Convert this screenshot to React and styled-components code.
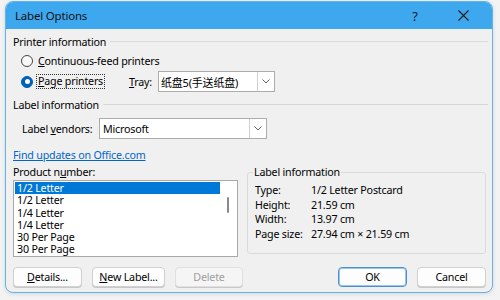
import React from "react";
import styled, { createGlobalStyle } from "styled-components";

const Global = createGlobalStyle`
  html, body { margin: 0; padding: 0; background: #f3f3f3; }
  body {
    font-family: "Noto Sans", "Noto Sans CJK SC", sans-serif;
    font-size: 10.7px;
    letter-spacing: -0.2px;
    color: #000;
  }
  * { box-sizing: border-box; }
`;

const Page = styled.div`
  padding: 1px 0 0 5px;
  width: 500px;
  height: 300px;
`;

const Dialog = styled.div`
  width: 488px;
  height: 292px;
  border: 1px solid #62b2ec;
  border-radius: 8px;
  overflow: hidden;
  background: #f0f0f0;
  display: flex;
  flex-direction: column;
  box-shadow: 0 1px 4px rgba(0,0,0,0.12);
`;

const TitleBar = styled.div`
  height: 27px;
  background: #3ea8ef;
  display: flex;
  align-items: center;
  padding-left: 9px;
  font-size: 11.5px;
  color: #111;
`;

const TitleText = styled.div`
  flex: 1;
`;

const TitleButton = styled.div`
  width: ${p => p.$w}px;
  display: flex;
  align-items: center;
  justify-content: center;
  font-size: 13px;
  color: #1a1a1a;
`;

const Body = styled.div`
  flex: 1;
  display: flex;
  flex-direction: column;
  padding: 0 6px 0 7px;
`;

const SectionHeader = styled.div`
  height: 16px;
  margin-top: ${p => p.$mt}px;
  margin-right: -2px;
  display: flex;
  align-items: center;
  gap: 4px;
  &::after {
    content: "";
    flex: 1;
    height: 1px;
    background: #d9d9d9;
    margin-top: -1px;
  }
`;

const Row = styled.div`
  height: ${p => p.$h || 20}px;
  margin-top: ${p => p.$mt || 0}px;
  padding-left: ${p => p.$pl || 0}px;
  display: flex;
  align-items: center;
`;

const RadioItem = styled.div`
  width: ${p => (p.$w ? `${p.$w}px` : "auto")};
  flex: none;
  display: flex;
  align-items: center;
`;

const RadioCircle = styled.span`
  width: 12px;
  height: 12px;
  border-radius: 50%;
  flex: none;
  margin-right: 3px;
  display: flex;
  align-items: center;
  justify-content: center;
  border: 1px solid ${p => (p.$checked ? "#005fb8" : "#444")};
  background: ${p => (p.$checked ? "#005fb8" : "#f9f9f9")};
  &::after {
    content: "";
    display: ${p => (p.$checked ? "block" : "none")};
    width: 5px;
    height: 5px;
    border-radius: 50%;
    background: #fff;
  }
`;

const RadioLabel = styled.span`
  padding: 0 1px;
  border: 1px dotted ${p => (p.$focus ? "#333" : "transparent")};
  line-height: 13px;
`;

const U = styled.span`
  text-decoration: underline;
  text-underline-offset: 1px;
`;

const FieldLabel = styled.span`
  width: ${p => p.$w}px;
  flex: none;
`;

const Combo = styled.div`
  width: ${p => p.$w}px;
  height: 21px;
  border: 1px solid #acacac;
  background: #fff;
  display: flex;
  align-items: stretch;
`;

const ComboText = styled.div`
  flex: 1;
  padding-left: ${p => p.$pl || 3}px;
  display: flex;
  align-items: center;
  font-size: ${p => p.$fs || 10.7}px;
  white-space: nowrap;
  overflow: hidden;
`;

const ComboArrow = styled.div`
  width: 17px;
  border-left: 1px solid #d0d0d0;
  display: flex;
  align-items: center;
  justify-content: center;
`;

const Link = styled.a`
  display: block;
  height: 16px;
  line-height: 16px;
  margin-top: 8px;
  color: #0066cc;
  text-decoration: underline;
  text-underline-offset: 1px;
`;

const Columns = styled.div`
  display: grid;
  grid-template-columns: 225px 239px;
  column-gap: 9px;
  align-items: start;
  margin-top: 1px;
`;

const ListColumn = styled.div`
  display: flex;
  flex-direction: column;
`;

const ListTitle = styled.div`
  height: 16px;
  line-height: 16px;
`;

const ListBox = styled.div`
  height: 77px;
  border: 1px solid #a8a8a8;
  background: #fff;
  padding: 1px;
  display: flex;
  overflow: hidden;
`;

const Items = styled.div`
  flex: 1;
  display: flex;
  flex-direction: column;
`;

const Item = styled.div`
  height: 12.3px;
  line-height: 12.3px;
  flex: none;
  padding-left: 2px;
  background: ${p => (p.$selected ? "#0078d7" : "transparent")};
  color: ${p => (p.$selected ? "#fff" : "#000")};
`;

const ScrollTrack = styled.div`
  width: 16px;
  flex: none;
  position: relative;
`;

const ScrollThumb = styled.div`
  position: absolute;
  left: 7px;
  top: 15px;
  width: 2px;
  height: 16px;
  border-radius: 1px;
  background: #8a8a8a;
`;

const Group = styled.fieldset`
  margin: 0;
  height: 90px;
  border: 1px solid #dadada;
  border-radius: 3px;
  padding: 0 0 0 5px;
  min-width: 0;
`;

const Legend = styled.legend`
  padding: 0 1px;
  line-height: 16px;
`;

const InfoGrid = styled.div`
  display: grid;
  grid-template-columns: 56px 1fr;
  padding-left: 2px;
  margin-top: 3px;
  line-height: 14.7px;
`;

const Buttons = styled.div`
  display: flex;
  margin-top: 10px;
  gap: 10px;
`;

const Spacer = styled.div`
  flex: 1;
`;

const Button = styled.div`
  width: ${p => p.$w}px;
  height: 20px;
  border-radius: 4px;
  background: ${p => (p.$disabled ? "#f5f5f5" : "#fdfdfd")};
  border: 1px solid ${p => (p.$primary ? "#4a90d0" : p.$disabled ? "#e0e0e0" : "#d0d0d0")};
  box-shadow: ${p => (p.$primary ? "inset 0 0 0 1px #9cc6ea" : "0 1px 0 #c8c8c8")};
  color: ${p => (p.$disabled ? "#a0a0a0" : "#000")};
  display: flex;
  align-items: center;
  justify-content: center;
`;

const Chevron = () => (
  <svg width="8" height="5" viewBox="0 0 8 5">
    <path d="M0.5 0.5 L4 4 L7.5 0.5" fill="none" stroke="#606060" strokeWidth="1" />
  </svg>
);

const CloseIcon = () => (
  <svg width="11" height="11" viewBox="0 0 11 11">
    <path d="M0.5 0.5 L10.5 10.5 M10.5 0.5 L0.5 10.5" stroke="#1a1a1a" strokeWidth="1.1" />
  </svg>
);

const items = ["1/2 Letter", "1/2 Letter", "1/4 Letter", "1/4 Letter", "30 Per Page", "30 Per Page"];

export default function App() {
  return (
    <Page>
      <Global />
      <Dialog>
        <TitleBar>
          <TitleText>Label Options</TitleText>
          <TitleButton $w={16}>?</TitleButton>
          <TitleButton $w={25} />
          <TitleButton $w={30}><CloseIcon /></TitleButton>
          <TitleButton $w={14} />
        </TitleBar>
        <Body>
          <SectionHeader $mt={5}>Printer information</SectionHeader>
          <Row $mt={1} $pl={8}>
            <RadioItem>
              <RadioCircle />
              <RadioLabel><U>C</U>ontinuous-feed printers</RadioLabel>
            </RadioItem>
          </Row>
          <Row $h={21} $pl={8}>
            <RadioItem $w={108}>
              <RadioCircle $checked />
              <RadioLabel $focus><U>P</U>age printers</RadioLabel>
            </RadioItem>
            <FieldLabel $w={29}><U>T</U>ray:</FieldLabel>
            <Combo $w={117}>
              <ComboText $pl={2} $fs={11}>纸盘5(手送纸盘)</ComboText>
              <ComboArrow><Chevron /></ComboArrow>
            </Combo>
          </Row>
          <SectionHeader $mt={5}>Label information</SectionHeader>
          <Row $h={21} $mt={5} $pl={9}>
            <FieldLabel $w={77}>Label <U>v</U>endors:</FieldLabel>
            <Combo $w={168}>
              <ComboText>Microsoft</ComboText>
              <ComboArrow><Chevron /></ComboArrow>
            </Combo>
          </Row>
          <Link>Find updates on Office.com</Link>
          <Columns>
            <ListColumn>
              <ListTitle>Product n<U>u</U>mber:</ListTitle>
              <ListBox>
                <Items>
                  {items.map((t, i) => (
                    <Item key={i} $selected={i === 0}>{t}</Item>
                  ))}
                </Items>
                <ScrollTrack><ScrollThumb /></ScrollTrack>
              </ListBox>
            </ListColumn>
            <Group>
              <Legend>Label information</Legend>
              <InfoGrid>
                <span>Type:</span><span>1/2 Letter Postcard</span>
                <span>Height:</span><span>21.59 cm</span>
                <span>Width:</span><span>13.97 cm</span>
                <span>Page size:</span><span>27.94 cm × 21.59 cm</span>
              </InfoGrid>
            </Group>
          </Columns>
          <Buttons>
            <Button $w={69}><U>D</U>etails...</Button>
            <Button $w={73}><U>N</U>ew Label...</Button>
            <Button $w={68} $disabled>Delete</Button>
            <Spacer />
            <Button $w={69} $primary>OK</Button>
            <Button $w={69}>Cancel</Button>
          </Buttons>
        </Body>
      </Dialog>
    </Page>
  );
}
